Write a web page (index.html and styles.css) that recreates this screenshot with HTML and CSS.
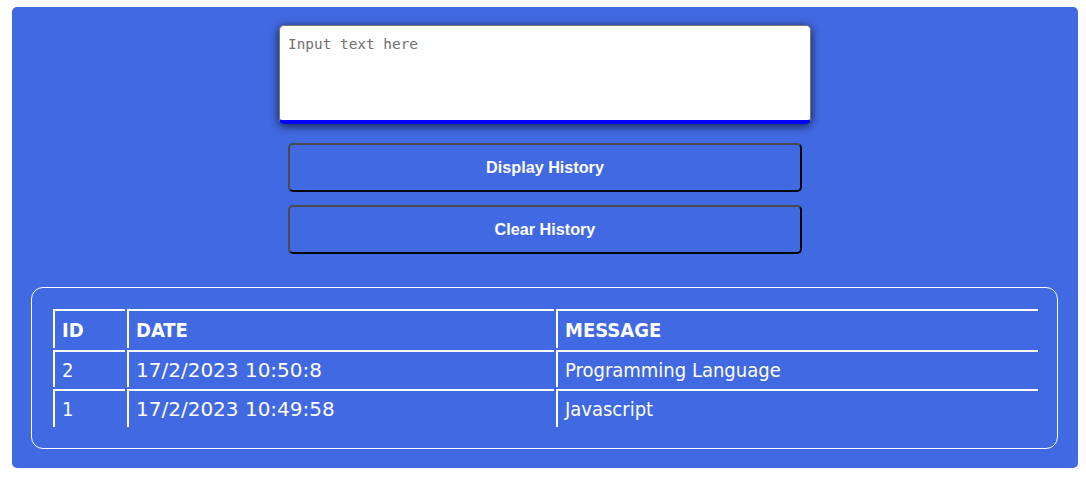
FILE: index.html
```html
<!DOCTYPE html>
<html>
<head>
<meta charset="utf-8">
<link rel="stylesheet" href="styles.css">
</head>
<body>
<div class="app">
  <textarea class="input" placeholder="Input text here" autofocus></textarea>
  <button class="btn btn-first">Display History</button>
  <button class="btn btn-second">Clear History</button>
  <div class="history">
    <table class="table">
      <thead>
        <tr><th class="c-id">ID</th><th class="c-date">DATE</th><th class="c-msg">MESSAGE</th></tr>
      </thead>
      <tbody>
        <tr><td>2</td><td class="date">17/2/2023 10:50:8</td><td>Programming Language</td></tr>
        <tr class="last"><td>1</td><td class="date">17/2/2023 10:49:58</td><td>Javascript</td></tr>
      </tbody>
    </table>
  </div>
</div>
</body>
</html>
```

FILE: styles.css
```css
html, body {
  margin: 0;
  background: #fff;
}
body {
  padding: 7px 8px 11px 12px;
}
.app {
  background: #4169e1;
  border-radius: 5px;
  height: 461px;
  box-sizing: border-box;
  padding-top: 18px;
  display: flex;
  flex-direction: column;
  align-items: center;
}
.input {
  width: 532px;
  height: 99px;
  box-sizing: border-box;
  margin: 0;
  padding: 9px 8px;
  border: 1px solid #777;
  border-bottom: 4px solid #0000ff;
  border-radius: 5px;
  background: #fff;
  box-shadow: 0 2px 10px rgba(0, 0, 0, 0.7);
  font-family: "DejaVu Sans Mono", "Liberation Mono", monospace;
  font-size: 14.4px;
  line-height: 18px;
  resize: none;
  outline: none;
  display: block;
}
.input::placeholder {
  color: #707070;
}
.btn {
  width: 514px;
  height: 49px;
  box-sizing: border-box;
  background: transparent;
  border: 2px solid;
  border-color: #4a4a4a #000 #000 #4a4a4a;
  border-radius: 5px;
  color: #fff;
  font-family: "Liberation Sans", Arial, sans-serif;
  font-weight: bold;
  font-size: 16.2px;
  display: block;
}
.btn-first {
  margin-top: 19px;
}
.btn-second {
  margin-top: 13px;
}
.history {
  margin-top: 33px;
  width: 1027px;
  height: 162px;
  box-sizing: border-box;
  border: 1px solid #fff;
  border-radius: 12px;
  padding: 19px 17px 19px 19px;
  margin-left: -1px;
}
.table {
  width: 100%;
  border-spacing: 2px;
  color: #fff;
  font-family: "DejaVu Sans Condensed", "DejaVu Sans", sans-serif;
  font-stretch: condensed;
  font-size: 20px;
  text-align: left;
}
.table th,
.table td {
  border-top: 2px solid #fff;
  border-left: 2px solid #fff;
  padding: 0 0 0 7px;
  height: 37px;
  box-sizing: border-box;
}
.table th {
  font-weight: bold;
  height: 39px;
}
.table .date {
  font-family: "DejaVu Sans", sans-serif;
  font-stretch: normal;
}
.table .last td {
  height: 38px;
}
.c-id { width: 72px; }
.c-date { width: 427px; }
```
